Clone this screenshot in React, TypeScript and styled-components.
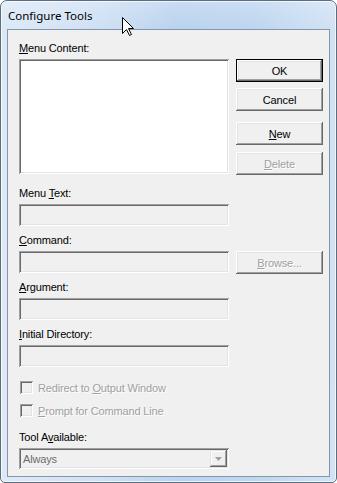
import styled, { createGlobalStyle } from 'styled-components';

const GlobalStyle = createGlobalStyle`
  html, body {
    margin: 0;
    padding: 0;
    background: #ffffff;
  }
  body {
    font-family: "Liberation Sans", Arial, sans-serif;
  }
`;

// --> Window frame (Aero basic) <--
const Window = styled.div`
  position: relative;
  box-sizing: border-box;
  width: 337px;
  height: 483px;
  display: flex;
  flex-direction: column;
  padding: 0 6px 5px 6px;
  border: 1px solid #5d6d80;
  border-radius: 7px 7px 5px 5px;
  overflow: hidden;
  background:
    linear-gradient(90deg, rgba(255,255,255,0.5) 0%, rgba(255,255,255,0.3) 30%, rgba(255,255,255,0) 52%, rgba(255,255,255,0.05) 75%, rgba(255,255,255,0.35) 100%),
    linear-gradient(180deg, #c8dcf3 0px, #b9d2ee 30px, #bcd4ee 100%);
  box-shadow: inset 0 0 0 1px rgba(255,255,255,0.7);
`;

const TitleBar = styled.div`
  height: 28px;
  display: flex;
  align-items: center;
  padding-left: 1px;
  font-family: "Noto Sans", "Open Sans", sans-serif;
  font-size: 11.5px;
  color: #000;
`;

const Cursor = styled.svg`
  position: absolute;
  left: 121px;
  top: 16px;
`;

const Client = styled.div`
  box-sizing: border-box;
  flex: 1;
  display: flex;
  gap: 7px;
  padding: 12px 0 0 11px;
  border: 1px solid #8396ad;
  background: #f0f0f0;
  font-size: 11px;
  letter-spacing: -0.15px;
  color: #000;
`;

const LeftCol = styled.div`
  width: 210px;
  display: flex;
  flex-direction: column;
`;

const RightCol = styled.div`
  width: 87px;
  display: flex;
  flex-direction: column;
  margin-top: 17px;
`;

const Label = styled.div<{ $mt?: number }>`
  height: 13px;
  line-height: 13px;
  margin-top: ${p => p.$mt ?? 0}px;
  white-space: nowrap;
`;

const Key = styled.span`
  text-decoration: underline;
  text-underline-offset: 1px;
`;

const sunken = `
  box-shadow:
    inset 1px 1px #a0a0a0,
    inset -1px -1px #ffffff,
    inset 2px 2px #696969,
    inset -2px -2px #e3e3e3;
`;

const ListBox = styled.div`
  height: 115px;
  margin-top: 4px;
  background: #ffffff;
  ${sunken}
`;

const TextBox = styled.div<{ $mt?: number }>`
  height: 22px;
  margin-top: ${p => p.$mt ?? 4}px;
  background: #f0f0f0;
  ${sunken}
`;

const CheckRow = styled.div<{ $mt: number }>`
  display: flex;
  align-items: center;
  gap: 5px;
  height: 13px;
  margin-top: ${p => p.$mt}px;
  padding-left: 1px;
  color: #a0a0a0;
  text-shadow: 1px 1px 0 #ffffff;
  white-space: nowrap;
`;

const CheckBox = styled.span`
  width: 13px;
  height: 13px;
  flex: none;
  background: #f0f0f0;
  ${sunken}
`;

const Combo = styled.div`
  height: 21px;
  margin-top: 4px;
  display: flex;
  align-items: center;
  justify-content: space-between;
  padding: 0 2px 0 4px;
  background: #f0f0f0;
  color: #6d6d6d;
  ${sunken}
`;

const ComboArrow = styled.span`
  width: 17px;
  height: 17px;
  display: flex;
  align-items: center;
  justify-content: center;
  background: #f0f0f0;
  box-shadow:
    inset -1px -1px #696969,
    inset 1px 1px #e3e3e3,
    inset -2px -2px #a0a0a0,
    inset 2px 2px #ffffff;
`;

const Button = styled.div<{ $mt?: number; $default?: boolean; $disabled?: boolean }>`
  box-sizing: border-box;
  height: 23px;
  margin-top: ${p => p.$mt ?? 0}px;
  display: flex;
  align-items: center;
  justify-content: center;
  background: #f0f0f0;
  color: ${p => (p.$disabled ? '#a0a0a0' : '#000')};
  text-shadow: ${p => (p.$disabled ? '1px 1px 0 #ffffff' : 'none')};
  border: ${p => (p.$default ? '1px solid #000' : 'none')};
  box-shadow:
    inset -1px -1px #696969,
    inset 1px 1px #ffffff,
    inset -2px -2px #a0a0a0,
    inset 2px 2px #e3e3e3;
`;

export default function App() {
  return (
    <>
      <GlobalStyle />
      <Window>
        <TitleBar>Configure Tools</TitleBar>
        <Client>
          <LeftCol>
            <Label><Key>M</Key>enu Content:</Label>
            <ListBox />
            <Label $mt={13}>Menu <Key>T</Key>ext:</Label>
            <TextBox />
            <Label $mt={8}><Key>C</Key>ommand:</Label>
            <TextBox />
            <Label $mt={8}><Key>A</Key>rgument:</Label>
            <TextBox />
            <Label $mt={8}><Key>I</Key>nitial Directory:</Label>
            <TextBox />
            <CheckRow $mt={14}>
              <CheckBox />
              <span>Redirect to <Key>O</Key>utput Window</span>
            </CheckRow>
            <CheckRow $mt={10}>
              <CheckBox />
              <span><Key>P</Key>rompt for Command Line</span>
            </CheckRow>
            <Label $mt={14}>Tool A<Key>v</Key>ailable:</Label>
            <Combo>
              <span>Always</span>
              <ComboArrow>
                <svg width="7" height="4" viewBox="0 0 7 4">
                  <path d="M0 0 H7 L3.5 4 Z" fill="#a0a0a0" />
                </svg>
              </ComboArrow>
            </Combo>
          </LeftCol>
          <RightCol>
            <Button $default>OK</Button>
            <Button $mt={6}>Cancel</Button>
            <Button $mt={11}><span><Key>N</Key>ew</span></Button>
            <Button $mt={7} $disabled><span><Key>D</Key>elete</span></Button>
            <Button $mt={76} $disabled><span><Key>B</Key>rowse...</span></Button>
          </RightCol>
        </Client>
        <Cursor width="13" height="20" viewBox="0 0 13 20">
          <path d="M0.5 0.5 V16.5 L4.5 12.5 L7.5 18.5 L9.5 17.5 L6.5 11.5 H11.5 Z" fill="#fff" stroke="#000" strokeWidth="1" />
        </Cursor>
      </Window>
    </>
  );
}
